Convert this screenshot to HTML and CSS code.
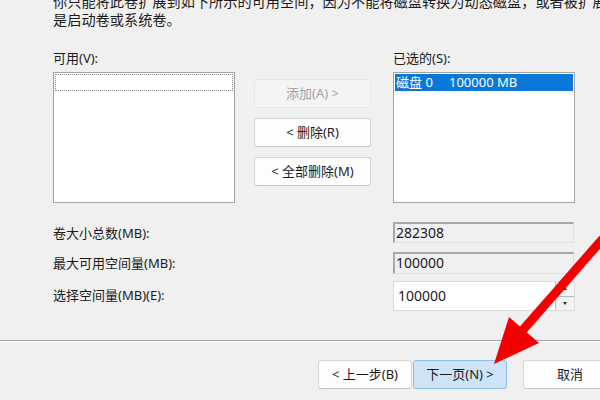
FILE: index.html
```html
<!DOCTYPE html>
<html lang="zh-CN">
<head>
<meta charset="utf-8">
<link rel="stylesheet" href="styles.css">
</head>
<body>
<div class="dialog">
  <div class="content">
    <p class="intro">
      <span class="line">你只能将此卷扩展到如下所示的可用空间，因为不能将磁盘转换为动态磁盘，或者被扩展的卷</span>
      <span class="line">是启动卷或系统卷。</span>
    </p>
    <div class="pickers">
      <div class="col">
        <div class="lbl">可用(V):</div>
        <div class="listbox"><div class="focus-row"></div></div>
      </div>
      <div class="btns">
        <div class="btn disabled">添加(A) &gt;</div>
        <div class="btn">&lt; 删除(R)</div>
        <div class="btn">&lt; 全部删除(M)</div>
      </div>
      <div class="col right">
        <div class="lbl">已选的(S):</div>
        <div class="listbox"><div class="sel-row"><span class="disk">磁盘 0</span><span>100000 MB</span></div></div>
      </div>
    </div>
    <div class="fields">
      <div class="flbl">卷大小总数(MB):</div>
      <div class="ro">282308</div>
      <div class="flbl">最大可用空间量(MB):</div>
      <div class="ro">100000</div>
      <div class="flbl up">选择空间量(MB)(E):</div>
      <div class="spin">
        <div class="spin-val">100000</div>
        <div class="spin-btns">
          <div class="spin-up"><span class="tri-up"></span></div>
          <div class="spin-down"><span class="tri-down"></span></div>
        </div>
      </div>
    </div>
  </div>
  <div class="sep"></div>
  <div class="footer">
    <div class="fbtn">&lt; 上一步(B)</div>
    <div class="fbtn primary">下一页(N) &gt;</div>
    <div class="fbtn cancel">取消</div>
  </div>
  <svg class="arrow" width="600" height="400" viewBox="0 0 600 400">
    <line x1="614" y1="226" x2="522" y2="331" stroke="#f40000" stroke-width="9"/>
    <polygon points="494,364 509,317 539,343" fill="#f40000"/>
  </svg>
</div>
</body>
</html>
```
FILE: styles.css
```css
* { box-sizing: border-box; }
html, body {
  margin: 0;
  padding: 0;
  width: 600px;
  height: 400px;
  overflow: hidden;
  background: #f0f0f0;
}
body {
  font-family: "Noto Sans", "Noto Sans CJK SC", sans-serif;
  font-size: 13px;
  color: #1b1b1b;
}
.dialog {
  position: relative;
  width: 600px;
  height: 400px;
  overflow: hidden;
}
.content {
  padding-left: 53px;
}
.intro {
  margin: -7px 0 0 0;
  line-height: 18px;
  font-size: 14.2px;
  white-space: nowrap;
}
.intro .line { display: block; }
.pickers {
  margin-top: 20px;
  display: flex;
  align-items: flex-start;
}
.col {
  flex: none;
  width: 182px;
  display: flex;
  flex-direction: column;
}
.col.right { margin-left: 22px; }
.lbl {
  line-height: 18px;
  height: 18px;
  margin-bottom: 5px;
}
.listbox {
  width: 182px;
  height: 131px;
  background: #fff;
  border: 1px solid #a3a3a3;
  padding: 1px;
}
.focus-row {
  height: 17px;
  border: 1px dotted #8a8a8a;
}
.sel-row {
  height: 17px;
  background: #0a78d8;
  color: #fff;
  line-height: 17px;
  padding-left: 1px;
  white-space: nowrap;
}
.sel-row .disk { display: inline-block; width: 53px; }
.btns {
  flex: none;
  width: 117px;
  margin-left: 19px;
  padding-top: 30px;
  display: flex;
  flex-direction: column;
  gap: 10px;
}
.btn {
  height: 29px;
  line-height: 27px;
  text-align: center;
  background: #fdfdfd;
  border: 1px solid #d6d6d6;
  border-bottom-color: #c4c4c4;
  border-radius: 3px;
  white-space: nowrap;
}
.btn.disabled {
  background: #f4f4f4;
  border-color: #e6e6e6;
  color: #a2a2a2;
}
.fields {
  margin-top: 19px;
  display: grid;
  grid-template-columns: 340px 182px;
  grid-template-rows: 21px 22px 30px;
  row-gap: 9px;
}
.flbl {
  align-self: center;
  line-height: 18px;
  white-space: nowrap;
}
.flbl.up { margin-top: -6px; }
.ro {
  width: 181px;
  background: #f0f0f0;
  border-top: 2px solid #a8a8a8;
  border-left: 2px solid #a8a8a8;
  border-right: 1px solid #e2e2e2;
  border-bottom: 1px solid #e2e2e2;
  padding-left: 1px;
  font-size: 14px;
  line-height: 18px;
  white-space: nowrap;
}
.spin {
  margin-top: -2px;
  height: 30px;
  width: 182px;
  background: #fff;
  border: 1px solid #dcdcdc;
  display: flex;
}
.spin-val {
  flex: 1;
  padding-left: 4px;
  font-size: 14px;
  line-height: 28px;
}
.spin-btns {
  width: 19px;
  display: flex;
  flex-direction: column;
  border-left: 1px solid #b9b9b9;
}
.spin-up, .spin-down {
  flex: 1;
  background: #f2f2f2;
  display: flex;
  align-items: center;
  justify-content: center;
}
.spin-up { border-bottom: 1px solid #b9b9b9; }
.tri-down {
  width: 0; height: 0;
  border-left: 2.5px solid transparent;
  border-right: 2.5px solid transparent;
  border-top: 3px solid #333;
}
.tri-up {
  width: 0; height: 0;
  border-left: 2.5px solid transparent;
  border-right: 2.5px solid transparent;
  border-bottom: 3px solid #333;
}
.sep {
  margin-top: 27px;
  height: 2px;
  border-top: 1px solid #a5a5a5;
  border-bottom: 1px solid #fafafa;
}
.footer {
  padding-top: 18px;
  padding-left: 318px;
  display: flex;
  white-space: nowrap;
}
.fbtn {
  flex: none;
  width: 94px;
  height: 29px;
  line-height: 27px;
  text-align: center;
  background: #fdfdfd;
  border: 1px solid #d6d6d6;
  border-bottom-color: #c4c4c4;
  border-radius: 3px;
}
.fbtn.primary {
  margin-left: 1px;
  background: #cde4f7;
  border-color: #8cbde9;
}
.fbtn.cancel { margin-left: 16px; }
.arrow {
  position: absolute;
  left: 0;
  top: 0;
  pointer-events: none;
}
```
